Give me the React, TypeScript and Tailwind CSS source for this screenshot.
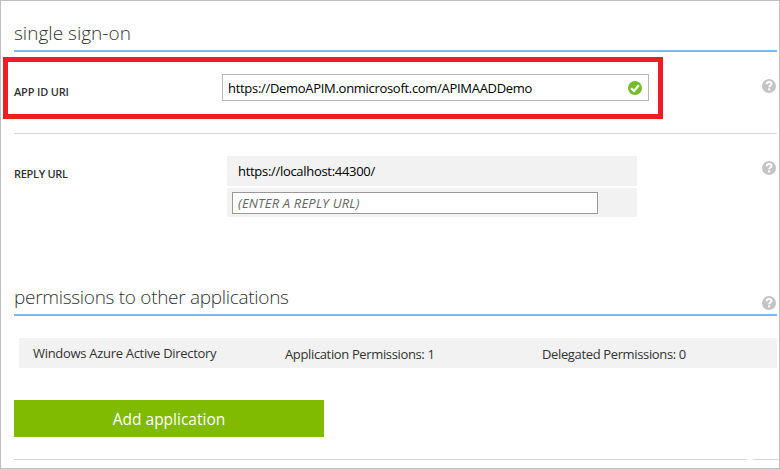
import React from "react";

function HelpIcon() {
  return (
    <svg width="14" height="14" viewBox="0 0 14 14" className="block shrink-0" aria-label="Help">
      <circle cx="7" cy="7" r="7" fill="#c4c4c4" />
      <path d="M4.6 5.2C4.7 3.7 5.7 3.1 7.1 3.1c1.4 0 2.3.7 2.3 1.8 0 1.5-2.2 1.6-2.2 3.4" fill="none" stroke="#fff" strokeWidth="2" />
      <rect x="6.1" y="9.4" width="2.1" height="2" fill="#fff" />
    </svg>
  );
}

function ValidIcon() {
  return (
    <svg width="14" height="14" viewBox="0 0 14 14" className="block shrink-0" aria-label="Valid">
      <circle cx="7" cy="7" r="7" fill="#76bd2c" />
      <path d="M3.1 7.2 6 10l4.8-5.7" fill="none" stroke="#fff" strokeWidth="2.2" />
    </svg>
  );
}

export default function App() {
  return (
    <div className="relative flex h-[469px] w-[780px] flex-col overflow-hidden border border-[#bfbfbf] bg-white pl-[13px] font-['Open_Sans','Noto_Sans',sans-serif] text-[13px] text-[#333]">
      <section className="flex h-[133px] w-[763px] flex-col border-b border-[#d6d6d6]">
        <h2 className="h-[51px] border-b-2 border-[#86b8e4] pt-[18px] text-[19px] leading-7 font-light tracking-[0.02px] text-[#333]">
          <span>single sign-on</span>
        </h2>
        <div className="flex pt-[22px]">
          <label className="w-[208px] pt-[8px] text-[11px] leading-5 font-semibold tracking-[-0.17px]">
            <span>APP ID URI</span>
          </label>
          <div className="flex h-[27px] w-[427px] items-center justify-between border border-[#b8b8b8] pr-[6px] pl-[5px] leading-5 tracking-[-0.3px] text-black">
            <span>https://DemoAPIM.onmicrosoft.com/APIMAADDemo</span>
            <ValidIcon />
          </div>
          <div className="ml-auto pt-[5px] pr-px"><HelpIcon /></div>
        </div>
      </section>

      <section className="flex h-[147px] w-[763px] pt-[22px]">
        <label className="w-[213px] pt-[8px] text-[11px] leading-5 font-semibold tracking-[-0.3px]">
          <span>REPLY URL</span>
        </label>
        <div className="flex w-[410px] flex-col gap-[2px]">
          <div className="flex h-[30px] items-center bg-[#f2f2f2] pl-[11px] leading-5 tracking-[-0.3px] text-black">
            <span>https://localhost:44300/</span>
          </div>
          <div className="h-[29px] bg-[#f2f2f2] pt-[4px] pl-[5px]">
            <div className="flex h-[22px] w-[366px] items-center border border-[#999] bg-white pl-[5px] leading-5 tracking-[0.18px] text-[#666] italic">
              <span>(ENTER A REPLY URL)</span>
            </div>
          </div>
        </div>
        <div className="ml-auto pt-[5px] pr-px"><HelpIcon /></div>
      </section>

      <section className="flex w-[763px] flex-col">
        <div className="flex h-[35px] justify-between border-b-2 border-[#86b8e4]">
          <h2 className="pt-[2px] text-[19px] leading-7 font-light tracking-[-0.3px] text-[#333]">
            <span>permissions to other applications</span>
          </h2>
          <div className="pt-[15px] pr-px"><HelpIcon /></div>
        </div>
        <div className="mt-[22px] ml-[5px] flex h-[30px] bg-[#f2f2f2] pl-[14px] leading-5 tracking-[-0.36px]">
          <div className="w-[252px] pt-[5px] tracking-[-0.3px]"><span>Windows Azure Active Directory</span></div>
          <div className="w-[257px] pt-[6px]"><span>Application Permissions: 1</span></div>
          <div className="pt-[6px]"><span>Delegated Permissions: 0</span></div>
        </div>
        <button className="mt-[32px] flex h-[37px] w-[310px] items-center justify-center bg-[#80ba01] text-[15.5px] leading-5 text-white">
          <span>Add application</span>
        </button>
      </section>
      <div className="mt-[22px] flex gap-[6px]">
        <div className="h-px w-[733px] bg-[#d6d6d6]" />
        <div className="h-px flex-1 bg-[#d6d6d6]" />
      </div>
      <div className="pointer-events-none absolute top-[56px] left-[2px] h-[62px] w-[660px] border-[5px] border-[#ee1c24]" />
    </div>
  );
}
